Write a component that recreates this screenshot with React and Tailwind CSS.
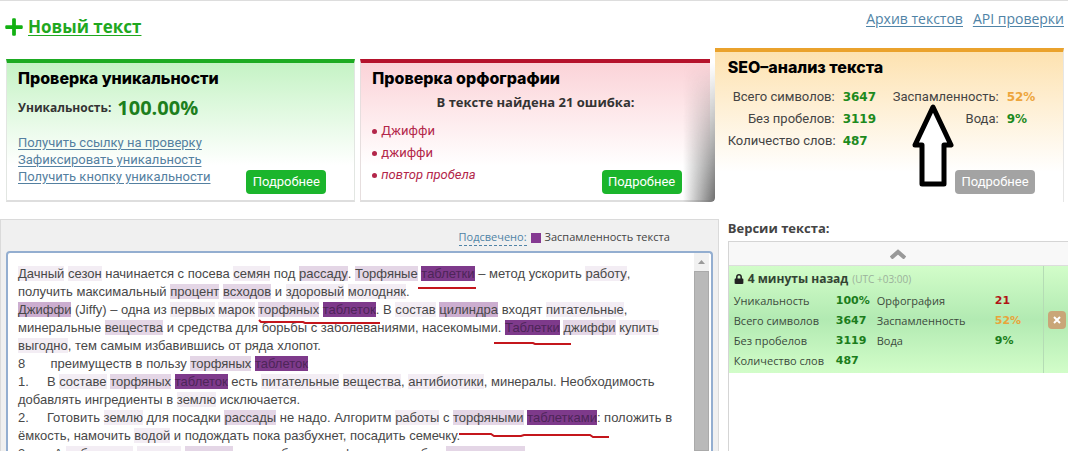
import { Fragment } from 'react';
import { FaLock, FaPlus } from 'react-icons/fa';

const levels = {
  1: 'bg-[#f3edf4]',
  2: 'bg-[#e4d6e6]',
  3: 'bg-[#ccaed0]',
  4: 'bg-[#7e3a8b] text-[#4d2558]',
};

// [level:word] marks a highlighted word
const lines = [
  '[1:Дачный] [1:сезон] начинается с посева [1:семян] под [2:рассаду]. [2:Торфяные] [4:таблетки] – метод ускорить [1:работу],',
  'получить максимальный [2:процент] [2:всходов] и [1:здоровый] [1:молодняк].',
  '[3:Джиффи] (Jiffy) – одна из [1:первых] [1:марок] [2:торфяных] [4:таблеток]. В [1:состав] [3:цилиндра] входят [1:питательные],',
  'минеральные [2:вещества] и средства для борьбы с заболеваниями, насекомыми. [4:Таблетки] [2:джиффи] [1:купить]',
  '[1:выгодно], тем самым избавившись от ряда хлопот.',
  '8       преимуществ в пользу [2:торфяных] [4:таблеток]',
  '1.     В [1:составе] [2:торфяных] [4:таблеток] есть [1:питательные] [1:вещества], [1:антибиотики], минералы. Необходимость',
  'добавлять ингредиенты в [1:землю] исключается.',
  '2.     Готовить [1:землю] для посадки [2:рассады] не надо. Алгоритм [1:работы] с [2:торфяными] [4:таблетками]: положить в',
  'ёмкость, намочить [1:водой] и подождать пока разбухнет, посадить семечку.',
  '3.       А [1:собранные] [1:семена] [2:всходов] не погибнут в торфе, если удобно [2:расположить]',
];

const versionRows = [
  ['Уникальность', '100%', 'Орфография', '21', 'text-[#b01515]'],
  ['Всего символов', '3647', 'Заспамленность', '52%', 'text-[#e9a43a]'],
  ['Без пробелов', '3119', 'Вода', '9%', 'text-[#1b7d1b]'],
  ['Количество слов', '487', '', '', ''],
];

function Line({ text }) {
  const parts = text.split(/(\[\d:[^\]]+\])/);
  return (
    <p className="whitespace-pre">
      {parts.map((part, i) => {
        const m = part.match(/^\[(\d):(.+)\]$/);
        if (!m) return <Fragment key={i}>{part}</Fragment>;
        return (
          <mark key={i} className={`inline-block h-[15px] leading-[15px] ${m[1] === '4' ? '' : 'text-[#484848]'} ${levels[m[1]]}`}>
            {m[2]}
          </mark>
        );
      })}
    </p>
  );
}

function CardTitle({ children }) {
  return <h2 className="font-[Inter,sans-serif] text-base leading-5 font-extrabold text-black">{children}</h2>;
}

function MoreButton({ gray }) {
  return (
    <button
      className={`absolute right-7 h-6 w-20 rounded font-[Roboto,sans-serif] text-[13px] text-white ${gray ? 'bottom-2 bg-[#a3a3a3]' : 'bottom-1.5 bg-[#1bb52c]'}`}
    >
      Подробнее
    </button>
  );
}

function Header() {
  return (
    <header className="flex h-12 shrink-0 justify-between border-t border-[#ddd] pr-1 pl-1">
      <a href="#new" className="flex items-center gap-1 pt-1 text-[17px] font-bold text-[#1fa81f]">
        <FaPlus className="size-5 text-[#12b012]" />
        <span className="underline underline-offset-2">Новый текст</span>
      </a>
      <nav className="flex gap-2.5 pt-2 text-sm leading-5 text-[#4f83a6] underline underline-offset-2">
        <a href="#archive">Архив текстов</a>
        <a href="#api">API проверки</a>
      </nav>
    </header>
  );
}

function UniqueCard() {
  return (
    <section className="relative mt-[11px] border-x border-t-4 border-b-2 border-x-[#e2e6e2] border-t-[#1dab22] border-b-[#dedede] bg-linear-to-b from-[#c5f3c5] to-white to-75% px-[11px] pt-[5px]">
      <CardTitle>Проверка уникальности</CardTitle>
      <p className="flex items-center gap-1.5 pt-2 text-xs leading-6 font-bold text-[#333]">
        Уникальность: <span className="text-xl leading-6 text-[#1d7f1d]">100.00%</span>
      </p>
      <ul className="pt-3.5 font-[Roboto,sans-serif] text-[13px] leading-[17px] text-[#5480a0] underline underline-offset-2">
        <li><a href="#link">Получить ссылку на проверку</a></li>
        <li><a href="#fix">Зафиксировать уникальность</a></li>
        <li><a href="#button">Получить кнопку уникальности</a></li>
      </ul>
      <MoreButton />
    </section>
  );
}

function SpellingCard() {
  return (
    <section className="relative mt-[11px] border-t-4 border-b-2 border-l border-t-[#b5122c] border-b-[#dedede] border-l-[#e6dede] bg-linear-to-b from-[#fbd3d8] to-white to-75% px-[11px] pt-[5px]">
      <div className="absolute top-0 -right-[5px] -bottom-0.5 w-8 rounded-br bg-linear-to-r from-transparent to-[#6d6d6d] mask-t-from-0%" />
      <CardTitle>Проверка орфографии</CardTitle>
      <p className="pt-1 text-center text-[13px] leading-5 font-bold text-[#333]">В тексте найдена 21 ошибка:</p>
      <ul className="pt-2 font-[Roboto,sans-serif] text-[13px] leading-[22px] text-[#b3264a]">
        {['Джиффи', 'джиффи'].map((word) => (
          <li key={word} className="flex items-center gap-1">
            <span className="size-[5px] rounded-full bg-current" />
            {word}
          </li>
        ))}
        <li className="flex items-center gap-1 italic">
          <span className="size-[5px] rounded-full bg-current" />
          повтор пробела
        </li>
      </ul>
      <MoreButton />
    </section>
  );
}

function SeoCard() {
  const label = 'text-right font-normal whitespace-nowrap text-[#444]';
  const value = 'pl-2 text-left font-[DejaVu_Sans,sans-serif] text-xs font-bold';
  return (
    <section className="relative border-t-4 border-r border-t-[#eaa22c] border-r-[#e6e6e6] bg-linear-to-b from-[#fde2b0] to-white to-80% pt-[5px] pl-[13px]">
      <CardTitle>SEO–анализ текста</CardTitle>
      <table className="mt-[9px] w-full table-fixed font-[Roboto,sans-serif] text-[13px] leading-[22px]">
        <tbody>
          <tr>
            <th className={`w-[107px] ${label}`}>Всего символов:</th>
            <td className={`w-[52px] text-[#1d8a1d] ${value}`}>3647</td>
            <th className={`w-28 ${label}`}>Заспамленность:</th>
            <td className={`text-[#eda53c] ${value}`}>52%</td>
          </tr>
          <tr>
            <th className={label}>Без пробелов:</th>
            <td className={`text-[#1d8a1d] ${value}`}>3119</td>
            <th className={label}>Вода:</th>
            <td className={`text-[#1d8a1d] ${value}`}>9%</td>
          </tr>
          <tr>
            <th className={label}>Количество слов:</th>
            <td className={`text-[#1d8a1d] ${value}`}>487</td>
          </tr>
        </tbody>
      </table>
      <svg className="absolute top-12 left-[196px] h-[88px] w-11" viewBox="0 0 44 88" fill="#fff" stroke="#000" strokeWidth="5" strokeLinejoin="round">
        <path d="M22 7 L40 45 H33 V84 H11 V45 H4 Z" />
      </svg>
      <MoreButton gray />
    </section>
  );
}

function Editor() {
  return (
    <section className="flex w-[67.3%] shrink-0 flex-col border border-b-0 border-[#dadada] bg-[#f0f0f0] px-[5px]">
      <div className="flex h-[31px] shrink-0 items-center justify-end gap-1 pt-1 pr-[43px] text-[11px] text-[#444]">
        <a href="#marks" className="border-b border-dashed border-[#4f83a6] leading-4 text-[#4f83a6]">Подсвечено:</a>
        <span className="size-2.5 bg-[#853a92]" />
        <span>Заспамленность текста</span>
      </div>
      <div className="flex min-h-0 flex-1 rounded-t border-2 border-b-0 border-[#93aed0] bg-white">
        <div
          role="textbox"
          aria-label="Текст"
          aria-multiline="true"
          className="relative min-w-0 flex-1 overflow-hidden pt-3 pl-[10px] font-[Liberation_Sans,sans-serif] text-[13px] leading-[18px] text-[#484848]"
        >
          {lines.map((line) => (
            <Line key={line} text={line} />
          ))}
          <svg className="absolute top-0 left-0 h-[200px] w-[680px]" viewBox="0 0 680 200" fill="none" stroke="#c4161c" strokeWidth="2">
            <path d="M410 35 H468" />
            <path d="M251 67 L253 69 H295 L297 70 H372" />
            <path d="M486 90 H525 L527 91 H563" />
            <path d="M451 181 H483 L486 183 H513 L516 182 H582 L585 184 H601" />
          </svg>
        </div>
        <div className="mr-0.5 flex w-[15px] shrink-0 flex-col bg-[#f1f1f1]">
          <svg className="h-[18px] w-full shrink-0" viewBox="0 0 15 18" fill="#9a9a9a">
            <path d="M4 11 L7.5 7 L11 11 Z" />
          </svg>
          <div className="flex-1 border border-[#aaa] bg-[#b9b9b9]" />
        </div>
      </div>
    </section>
  );
}

function Versions() {
  const num = 'font-[DejaVu_Sans,sans-serif] font-bold';
  return (
    <section className="flex min-w-0 flex-1 flex-col pl-[9px]">
      <h3 className="h-[22px] text-[13px] leading-[18px] font-bold text-[#444]">Версии текста:</h3>
      <div className="flex-1 border-t border-l border-[#d5d5d5]">
        <button aria-label="Свернуть" className="flex h-6 w-full items-center justify-center border-b border-[#ddd] bg-[#f8f8f8]">
          <svg className="h-2.5 w-4" viewBox="0 0 16 10" fill="none" stroke="#999" strokeWidth="4">
            <path d="M1 9 L8 3 L15 9" />
          </svg>
        </button>
        <div className="flex h-[107px] bg-linear-to-b from-[#d2fdc9] via-[#b2eab2] to-[#d2fdc9] text-[11px] text-[#3c4a3c]">
          <div className="min-w-0 flex-1 pt-1 pl-[5px]">
            <div className="flex items-center gap-1 leading-[18px]">
              <FaLock className="size-2.5 text-[#222]" />
              <b className="text-xs leading-[18px] text-[#334433]">4 минуты назад</b>
              <span className="text-[10px] text-[#9bb09b]">(UTC +03:00)</span>
            </div>
            <table className="mt-[3px] w-full table-fixed leading-5">
              <tbody>
                {versionRows.map(([name, value, name2, value2, color]) => (
                  <tr key={name}>
                    <td className="w-[102px]">{name}</td>
                    <td className={`w-[41px] text-[#1b7d1b] ${num}`}>{value}</td>
                    <td className="w-[118px]">{name2}</td>
                    <td className={`${num} ${color}`}>{value2}</td>
                  </tr>
                ))}
              </tbody>
            </table>
          </div>
          <div className="flex w-[25px] items-center border-l border-[#b5dcb5] pl-1">
            <button aria-label="Удалить" className="flex size-[18px] items-center justify-center rounded-sm bg-[#c9a678]">
              <svg className="size-2" viewBox="0 0 8 8" stroke="#fff" strokeWidth="2">
                <path d="M1 1 L7 7 M7 1 L1 7" />
              </svg>
            </button>
          </div>
        </div>
      </div>
    </section>
  );
}

export default function App() {
  return (
    <div className="flex h-screen flex-col overflow-hidden bg-white font-[Open_Sans,Noto_Sans,sans-serif]">
      <Header />
      <div className="grid h-[154px] shrink-0 grid-cols-3 gap-[5px] pr-1 pl-1.5">
        <UniqueCard />
        <SpellingCard />
        <SeoCard />
      </div>
      <div className="flex min-h-0 flex-1 pt-[17px]">
        <Editor />
        <Versions />
      </div>
    </div>
  );
}
